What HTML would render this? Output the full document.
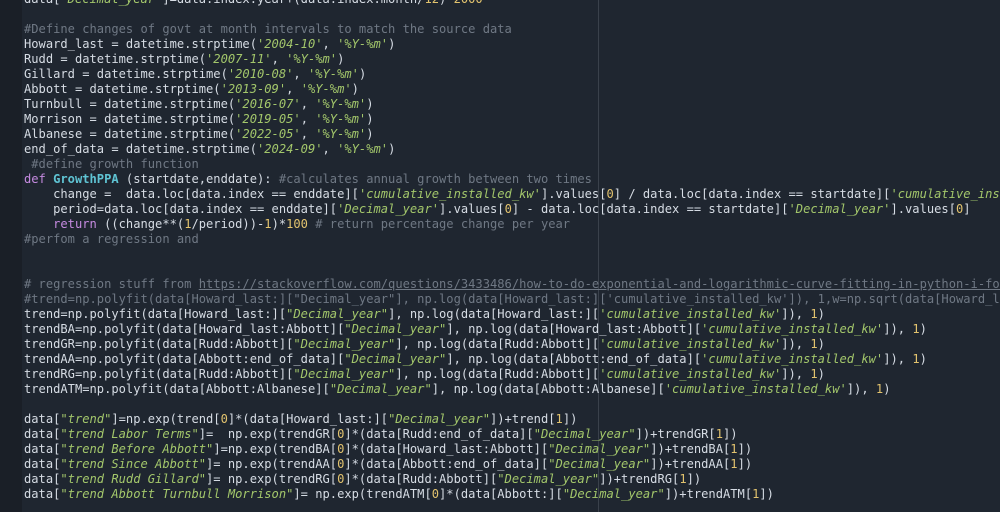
<!DOCTYPE html>
<html><head><meta charset="utf-8"><style>
html,body{margin:0;padding:0;width:1000px;height:512px;overflow:hidden;background:#1f2630;}
.g{position:absolute;left:0;top:0;width:22px;height:512px;background:#1a1f27;}
.v{position:absolute;left:598px;top:0;width:1px;height:512px;background:#3a414b;}
pre{position:absolute;left:24px;top:-8px;width:976px;height:520px;overflow:hidden;margin:0;font-family:"DejaVu Sans Mono","Liberation Mono",monospace;font-size:12.1px;line-height:15px;color:#d6dce4;white-space:pre;}
.c{color:#6f7884}.s{color:#a3c76b;font-style:italic}.n{color:#e2c36e}.k{color:#c58ae0}.f{color:#5fc4d4;font-weight:bold}.u{text-decoration:underline}
</style></head><body><div class="g"></div><div class="v"></div><pre>data[<span class="s">'Decimal_year'</span>]=data.index.year+(data.index.month/<span class="n">12</span>)-<span class="n">2000</span>

<span class="c">#Define changes of govt at month intervals to match the source data</span>
Howard_last = datetime.strptime(<span class="s">'2004-10'</span>, <span class="s">'%Y-%m'</span>)
Rudd = datetime.strptime(<span class="s">'2007-11'</span>, <span class="s">'%Y-%m'</span>)
Gillard = datetime.strptime(<span class="s">'2010-08'</span>, <span class="s">'%Y-%m'</span>)
Abbott = datetime.strptime(<span class="s">'2013-09'</span>, <span class="s">'%Y-%m'</span>)
Turnbull = datetime.strptime(<span class="s">'2016-07'</span>, <span class="s">'%Y-%m'</span>)
Morrison = datetime.strptime(<span class="s">'2019-05'</span>, <span class="s">'%Y-%m'</span>)
Albanese = datetime.strptime(<span class="s">'2022-05'</span>, <span class="s">'%Y-%m'</span>)
end_of_data = datetime.strptime(<span class="s">'2024-09'</span>, <span class="s">'%Y-%m'</span>)
 <span class="c">#define growth function</span>
<span class="k">def</span> <span class="f">GrowthPPA</span> (startdate,enddate): <span class="c">#calculates annual growth between two times</span>
    change =  data.loc[data.index == enddate][<span class="s">'cumulative_installed_kw'</span>].values[<span class="n">0</span>] / data.loc[data.index == startdate][<span class="s">'cumulative_installed_kw'</span>].values[<span class="n">0</span>]
    period=data.loc[data.index == enddate][<span class="s">'Decimal_year'</span>].values[<span class="n">0</span>] - data.loc[data.index == startdate][<span class="s">'Decimal_year'</span>].values[<span class="n">0</span>]
    <span class="k">return</span> ((change**(<span class="n">1</span>/period))-<span class="n">1</span>)*<span class="n">100</span> <span class="c"># return percentage change per year</span>
<span class="c">#perfom a regression and</span>


<span class="c"># regression stuff from <span class="u">https://stackoverflow.com/questions/3433486/how-to-do-exponential-and-logarithmic-curve-fitting-in-python-i-found-only-poly</span></span>
<span class="c">#trend=np.polyfit(data[Howard_last:]["Decimal_year"], np.log(data[Howard_last:]['cumulative_installed_kw']), 1,w=np.sqrt(data[Howard_last:]['cumulative_installed_kw']))</span>
trend=np.polyfit(data[Howard_last:][<span class="s">"Decimal_year"</span>], np.log(data[Howard_last:][<span class="s">'cumulative_installed_kw'</span>]), <span class="n">1</span>)
trendBA=np.polyfit(data[Howard_last:Abbott][<span class="s">"Decimal_year"</span>], np.log(data[Howard_last:Abbott][<span class="s">'cumulative_installed_kw'</span>]), <span class="n">1</span>)
trendGR=np.polyfit(data[Rudd:Abbott][<span class="s">"Decimal_year"</span>], np.log(data[Rudd:Abbott][<span class="s">'cumulative_installed_kw'</span>]), <span class="n">1</span>)
trendAA=np.polyfit(data[Abbott:end_of_data][<span class="s">"Decimal_year"</span>], np.log(data[Abbott:end_of_data][<span class="s">'cumulative_installed_kw'</span>]), <span class="n">1</span>)
trendRG=np.polyfit(data[Rudd:Abbott][<span class="s">"Decimal_year"</span>], np.log(data[Rudd:Abbott][<span class="s">'cumulative_installed_kw'</span>]), <span class="n">1</span>)
trendATM=np.polyfit(data[Abbott:Albanese][<span class="s">"Decimal_year"</span>], np.log(data[Abbott:Albanese][<span class="s">'cumulative_installed_kw'</span>]), <span class="n">1</span>)

data[<span class="s">"trend"</span>]=np.exp(trend[<span class="n">0</span>]*(data[Howard_last:][<span class="s">"Decimal_year"</span>])+trend[<span class="n">1</span>])
data[<span class="s">"trend Labor Terms"</span>]=  np.exp(trendGR[<span class="n">0</span>]*(data[Rudd:end_of_data][<span class="s">"Decimal_year"</span>])+trendGR[<span class="n">1</span>])
data[<span class="s">"trend Before Abbott"</span>]=np.exp(trendBA[<span class="n">0</span>]*(data[Howard_last:Abbott][<span class="s">"Decimal_year"</span>])+trendBA[<span class="n">1</span>])
data[<span class="s">"trend Since Abbott"</span>]= np.exp(trendAA[<span class="n">0</span>]*(data[Abbott:end_of_data][<span class="s">"Decimal_year"</span>])+trendAA[<span class="n">1</span>])
data[<span class="s">"trend Rudd Gillard"</span>]= np.exp(trendRG[<span class="n">0</span>]*(data[Rudd:Abbott][<span class="s">"Decimal_year"</span>])+trendRG[<span class="n">1</span>])
data[<span class="s">"trend Abbott Turnbull Morrison"</span>]= np.exp(trendATM[<span class="n">0</span>]*(data[Abbott:][<span class="s">"Decimal_year"</span>])+trendATM[<span class="n">1</span>])
</pre></body></html>
